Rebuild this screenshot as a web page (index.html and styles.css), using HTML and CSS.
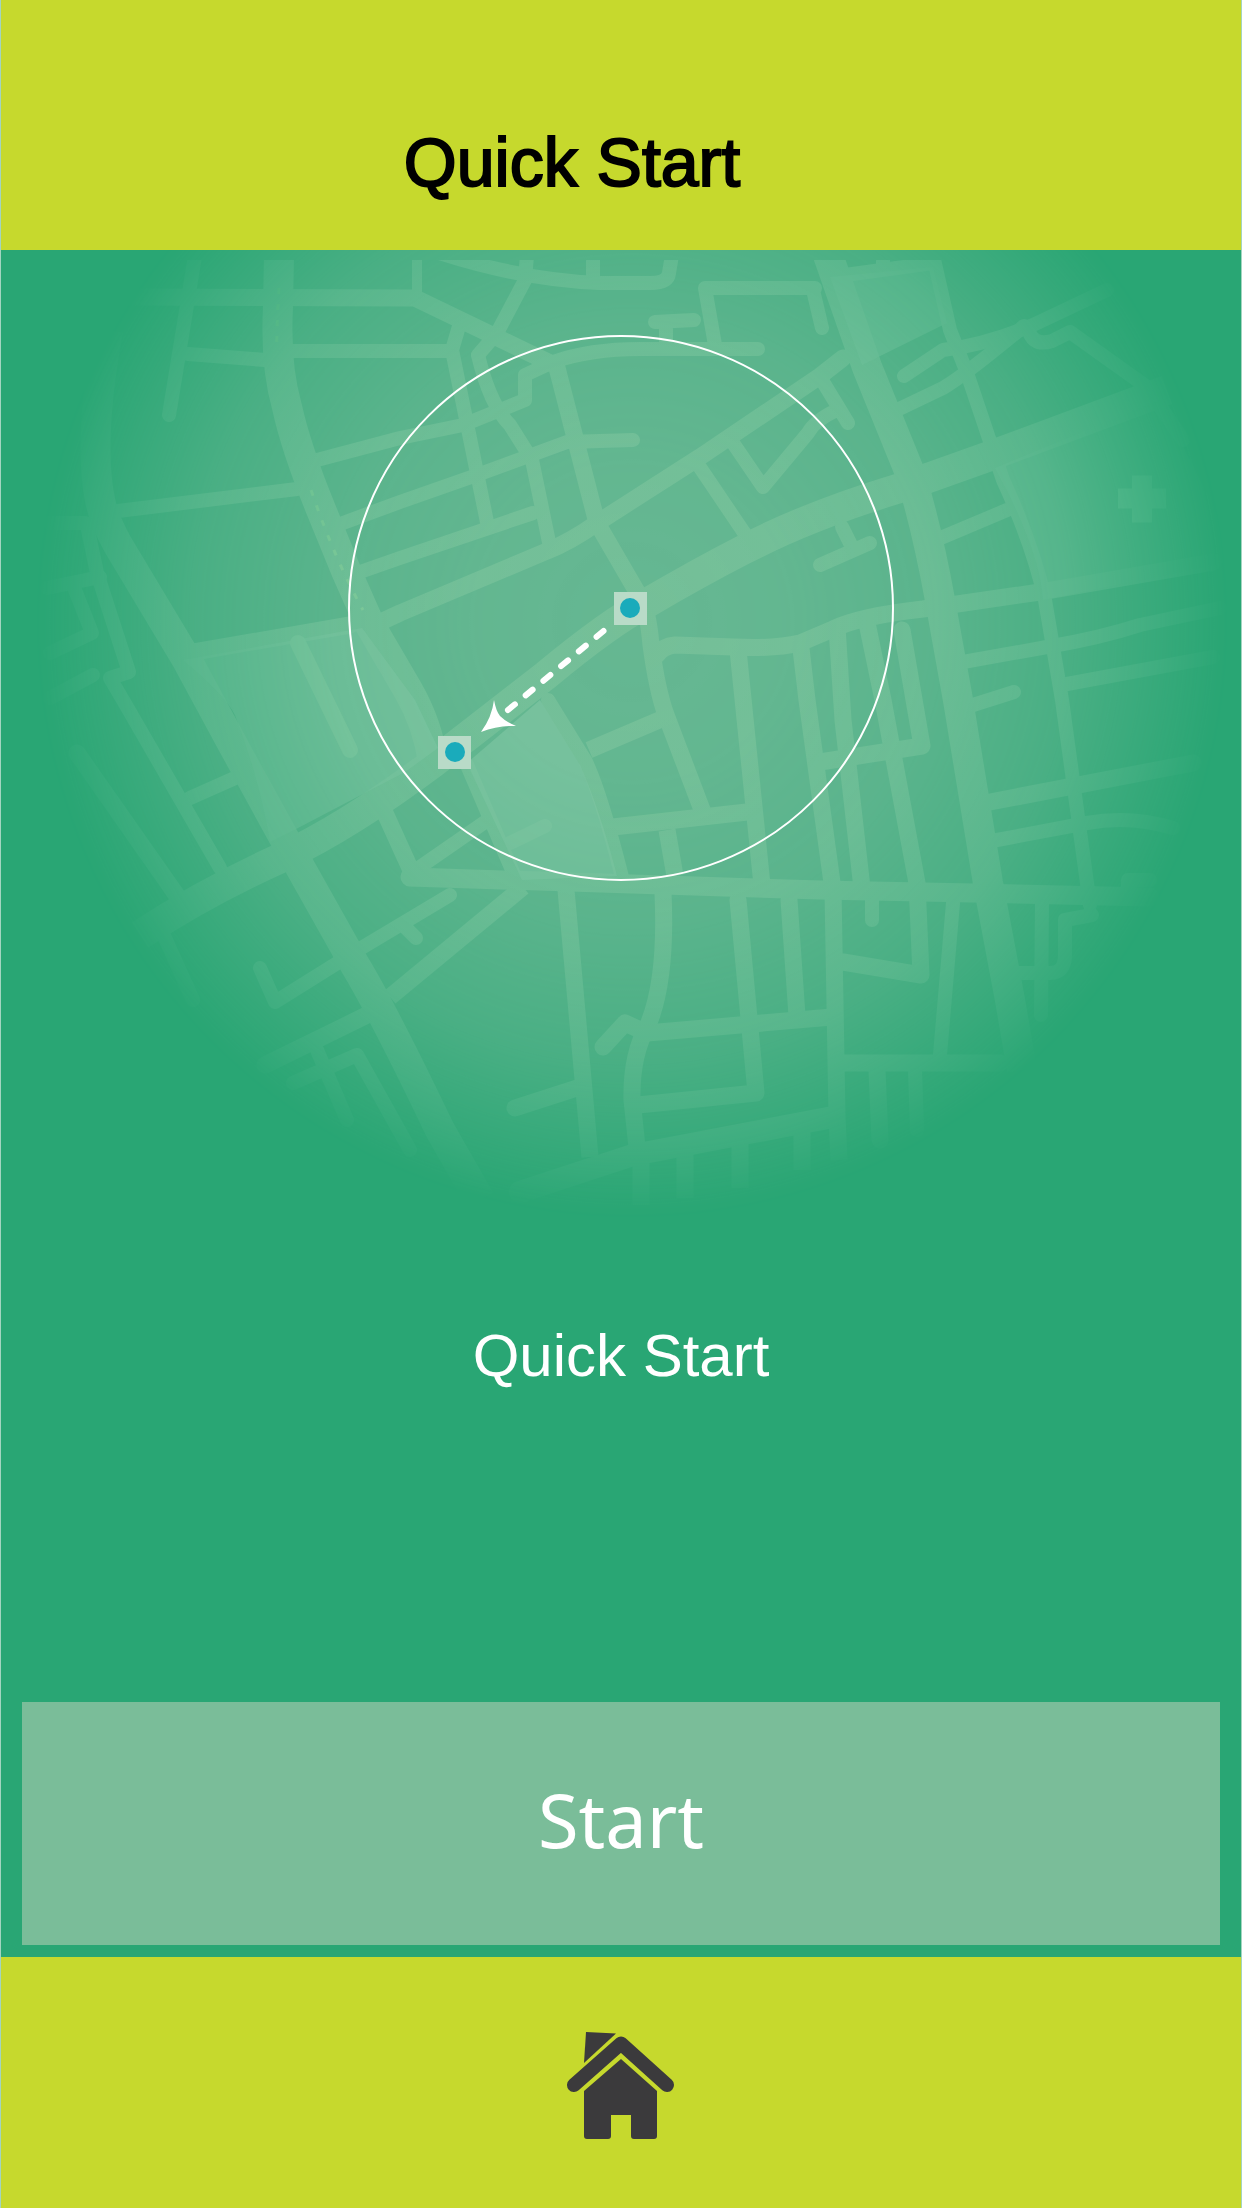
FILE: index.html
```html
<!DOCTYPE html>
<html lang="en">
<head>
<meta charset="utf-8">
<meta name="viewport" content="width=device-width, initial-scale=1">
<title>Quick Start</title>
<link rel="stylesheet" href="styles.css">
</head>
<body>
<div class="screen">
  <header class="top-bar">
    <h1 class="title">Quick Start</h1>
  </header>

  <main class="content">
    <svg class="map" viewBox="1 250 1240 970" role="img" aria-label="Map with a route between two points">
      <defs>
        <radialGradient id="fade" gradientUnits="userSpaceOnUse" cx="632" cy="622" r="596">
          <stop offset="0" stop-color="#fff"/>
          <stop offset="0.25" stop-color="#fff" stop-opacity="0.96"/>
          <stop offset="0.5" stop-color="#fff" stop-opacity="0.82"/>
          <stop offset="0.73" stop-color="#fff" stop-opacity="0.55"/>
          <stop offset="1" stop-color="#fff" stop-opacity="0"/>
        </radialGradient>
        <radialGradient id="tarmac" gradientUnits="userSpaceOnUse" cx="632" cy="622" r="596">
          <stop offset="0" stop-color="#75bf98"/>
          <stop offset="0.4" stop-color="#78c19b"/>
          <stop offset="0.75" stop-color="#80c4a1"/>
          <stop offset="1" stop-color="#90cbae"/>
        </radialGradient>
        <mask id="spot" maskUnits="userSpaceOnUse" x="0" y="250" width="1242" height="970">
          <rect x="0" y="250" width="1242" height="970" fill="url(#fade)"/>
        </mask>
        <clipPath id="sheet"><rect x="0" y="260" width="1242" height="960"/></clipPath>
      </defs>

      <g mask="url(#spot)">
        <rect class="land" x="0" y="250" width="1242" height="970"/>
        <g clip-path="url(#sheet)">
          <g class="roads" stroke="url(#tarmac)">
            <!-- main roads -->
            <g stroke-width="30" stroke-linecap="butt">
              <path d="M279 255L278 307Q275 365 287 407Q296 448 320 507L347 573L370 625L408 690Q428 725 433 762"/>
              <path d="M108 330Q88 440 100 500Q104 520 118 545L187 660L233 745L300 867L355 965Q385 1015 440 1130L480 1200"/>
              <path d="M140 935Q205 892 283 857Q350 825 433 763L545 676Q610 622 647 603Q700 572 743 550Q810 515 900 488L987 457L1167 390"/>
              <path d="M828 255L867 367L910 473Q927 528 940 600L958 700L988 883L1010 1000L1022 1070"/>
            </g>
            <path stroke-width="22" d="M520 1192L633 1155L833 1117"/>
            <path stroke-width="19" d="M410 877L820 890L973 893L1150 897"/>
            <g stroke-width="17">
              <path d="M130 297L415 298L550 363"/>
              <path d="M188 653L350 625"/>
              <path d="M385 620L400 613L547 551Q570 542 597 523L700 457L820 376L843 358"/>
              <path stroke-linecap="butt" d="M555 360L597 523L640 597Q648 610 651 645Q657 690 666 715L704 815"/>
              <path stroke-linecap="butt" d="M664 718L589 750M613 827L747 812M667 830L675 876"/>
              <path d="M657 655Q663 646 675 645L733 647Q775 649 800 643L833 629Q860 616 923 609L1040 592L1213 562"/>
              <path d="M990 802L1193 763"/>
              <path d="M385 813L414 877"/>
              <path stroke-linecap="butt" d="M738 650L762 885M800 640L807 700L833 890L837 1117L839 1160M837 627L843 720L862 888"/>
              <path d="M867 623L883 700L917 883L921 975L843 962"/>
              <path d="M902 630L922 746L820 762"/>
              <path stroke-linecap="butt" d="M523 887L390 997"/>
              <path stroke-linecap="butt" d="M566 890L590 1157M663 893Q667 980 648 1025Q631 1055 632 1100L637 1147"/>
              <path d="M515 1108L577 1088M738 900L756 1093L638 1105M789 900L797 1016"/>
              <path d="M603 1047L625 1023L647 1033L832 1017"/>
              <path stroke-linecap="butt" d="M641 1160V1205M685 1150V1198M740 1140V1188M802 1128V1170"/>
              <path d="M843 1063H1000M877 1070L880 1140"/>
              <path d="M367 1015L265 1065M77 753L180 900"/>
            </g>
            <g stroke-width="14">
              <path d="M196 250L169 415M188 354L265 360M118 511L297 489M50 523H85"/>
              <path d="M88 530L97 573L129 672L110 678L127 707L220 868"/>
              <path d="M47 588L100 577M75 590L92 633L50 653M93 675L50 698"/>
              <path d="M293 351H450"/>
              <path d="M317 460L400 438L463 425L525 400V375L553 362Q590 349 640 349L758 349"/>
              <path d="M343 523L400 502L477 475L567 442L633 440M360 572L400 558L533 513"/>
              <path stroke-width="10" d="M417 255V295"/>
              <path d="M430 250Q520 280 600 283H650Q668 283 669 273L672 255M593 255V280"/>
              <path d="M527 255L525 280L497 333L478 355Q490 405 510 425L532 460L550 547"/>
              <path d="M460 323L452 350L477 473L488 527"/>
              <path d="M815 288H705L715 345M655 322L694 320M666 323V343M813 290L822 328"/>
              <path d="M697 463L747 537M733 443L763 487L808 433Q815 420 837 410M820 377L848 423"/>
              <path d="M842 527L852 547M820 565L870 543"/>
              <path d="M933 255L950 330L967 373L1003 480Q1033 545 1045 600L1062 700L1090 905"/>
              <path d="M845 275L933 263M883 255V265"/>
              <path d="M904 376L943 350Q985 345 1033 325L1107 290"/>
              <path d="M897 410L943 388Q965 375 1024 326"/>
              <path d="M1030 334Q1036 346 1052 341L1070 332L1147 387L1183 440"/>
              <path d="M943 537L1007 510M963 662L1047 647Q1100 638 1140 625L1220 608M1067 684L1213 657M973 705L1014 692"/>
              <path d="M997 840L1087 823Q1130 815 1173 828"/>
              <path d="M872 900V920M548 700L585 760Q600 790 622 877M467 765L515 877M510 843L545 826M420 867L485 822"/>
              <path d="M450 895L363 947L275 1002L260 968M403 925L416 938"/>
              <path d="M293 1083L357 1055L410 1150M317 1050L347 1120M190 798L235 778M160 927L193 1000"/>
              <path d="M953 903L940 1055M915 1070L917 1130M1042 903L1041 1015"/>
              <path d="M1015 973H1050Q1065 973 1065 955V920L1092 915M1128 890V880H1150"/>
            </g>
          </g>
          <g class="park">
            <path d="M183 660L362 628L415 700L438 748L405 772L298 828L270 842Q260 780 235 715Q225 695 183 660Z"/>
            <path d="M467 763L540 700L580 765Q600 810 617 876L522 880Z"/>
            <path d="M830 277L933 267L947 323L862 365Z"/>
            <path d="M995 468L1160 400L1240 560L1043 600Q1040 550 995 468Z"/>
          </g>
          <path class="park-path" d="M298 643L350 750"/>
          <path class="cross" d="M1132 475.500h20v13h14v20h-14v14h-20v-14h-14v-20h14z"/>
          <path class="lane" d="M279 288Q276 340 277 352M311 490Q335 560 363 610"/>
        </g>
      </g>

      <circle class="range" cx="621" cy="608" r="272"/>
      <g class="marker">
        <rect x="614" y="592" width="33" height="33"/>
        <circle cx="630" cy="608" r="10"/>
        <rect x="438" y="736" width="33" height="33"/>
        <circle cx="455" cy="752" r="10"/>
      </g>
      <path class="route" d="M603.500 631L505 712.500"/>
      <path class="arrow" d="M481 732Q492 717 494 700Q496 711 500 716Q506 722 516 726Q498 725 481 732Z"/>
    </svg>

    <p class="caption">Quick Start</p>
    <button class="start" type="button">Start</button>
  </main>

  <footer class="bottom-bar">
    <a class="home" href="#" aria-label="Home">
      <svg class="home-icon" viewBox="0 0 108 108" aria-hidden="true">
        <path d="M19 0L49 1.500L17 31Z"/>
        <path d="M7 53L54 11.500L100 53" fill="none" stroke="#3b3a3c" stroke-width="14" stroke-linecap="round" stroke-linejoin="round"/>
        <path d="M54 27L90 59V104Q90 107 87 107H67Q64 107 64 104V83H44V104Q44 107 41 107H20Q17 107 17 104V59Z"/>
      </svg>
    </a>
  </footer>
</div>
</body>
</html>
```
FILE: styles.css
```css
* {
  box-sizing: border-box;
}

body {
  margin: 0;
  font-family: "Liberation Sans", Arial, sans-serif;
}

.screen {
  display: flex;
  flex-direction: column;
  min-height: 100vh;
  background: #29a674;
  border: solid #a3d5c0;
  border-width: 0 1px;
}

.top-bar {
  padding: 122px 98px 48px 0;
  background: #c6d92d;
  text-align: center;
}

.title {
  margin: 0;
  font-size: 68px;
  line-height: 80px;
  font-weight: 400;
  color: #000;
  -webkit-text-stroke: 2px #000;
}

.content {
  flex: 1;
  display: flex;
  flex-direction: column;
}

.map {
  display: block;
  width: 100%;
}

.land {
  fill: #66b792;
}

.roads {
  fill: none;
  stroke-linecap: round;
  stroke-linejoin: round;
}

.park {
  fill: #86c8a6;
  fill-opacity: 0.65;
}

.park-path {
  fill: none;
  stroke: #86c9a4;
  stroke-width: 16;
  stroke-linecap: round;
}

.cross {
  fill: #98d4b2;
}

.lane {
  fill: none;
  stroke: #8acd9e;
  stroke-width: 3;
  stroke-dasharray: 6 10;
}

.range {
  fill: none;
  stroke: #fff;
  stroke-width: 2;
}

.marker rect {
  fill: #b9dbc8;
}

.marker circle {
  fill: #1aabbb;
}

.route {
  fill: none;
  stroke: #fff;
  stroke-width: 6;
  stroke-linecap: round;
  stroke-dasharray: 9 14;
}

.arrow {
  fill: #fff;
}

.caption {
  margin: 100px 0 auto;
  font-size: 60px;
  line-height: 72px;
  text-align: center;
  color: #fff;
}

.start {
  margin: 0 21px 12px;
  padding: 66px 0 74px;
  border: 0;
  background: #7abd99;
  color: #fff;
  font-family: "Noto Sans", sans-serif;
  font-size: 74px;
  line-height: 103px;
  cursor: pointer;
}

.bottom-bar {
  display: flex;
  justify-content: center;
  padding: 75px 0 68px;
  background: #c6d92d;
}

.home {
  display: block;
}

.home-icon {
  display: block;
  width: 108px;
  height: 108px;
  fill: #3b3a3c;
}
```
